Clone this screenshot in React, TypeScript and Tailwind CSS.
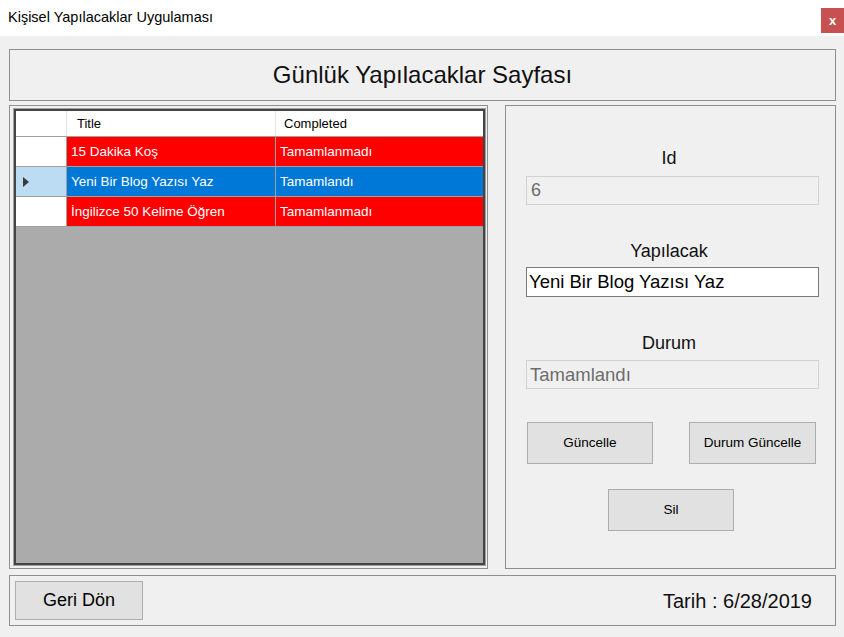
import React from "react";

const rows = [
  { title: "15 Dakika Koş", status: "Tamamlanmadı", selected: false },
  { title: "Yeni Bir Blog Yazısı Yaz", status: "Tamamlandı", selected: true },
  { title: "İngilizce 50 Kelime Öğren", status: "Tamamlanmadı", selected: false },
];

export default function App() {
  return (
    <div className="w-[844px] h-[637px] flex flex-col bg-[#f0f0f0] overflow-hidden" style={{ fontFamily: '"Liberation Sans", Arial, sans-serif' }}>
      {/* Title bar */}
      <div className="h-[36px] bg-white flex justify-between items-start shrink-0">
        <div className="pl-[8px] h-[36px] flex items-center text-[14.5px] text-black">Kişisel Yapılacaklar Uygulaması</div>
        <div className="mt-[8px] w-[23px] h-[25px] bg-[#c75050] flex items-center justify-center text-white text-[13px] font-bold leading-none">x</div>
      </div>

      <div className="flex flex-col pl-[9px] pr-[8px] pt-[13px]">
        {/* Header */}
        <div className="h-[52px] border border-[#8f8f8f] flex items-center justify-center text-[24px] text-[#111]">
          Günlük Yapılacaklar Sayfası
        </div>

        {/* Middle */}
        <div className="mt-[4px] h-[464px] flex gap-[17px]">
          {/* Left panel */}
          <div className="w-[479px] border border-[#8f8f8f] pl-[3px] pt-[2px] pr-[1px] pb-[2px] flex">
            <div className="flex-1 border border-[#a0a0a0] flex">
              <div className="flex-1 border-2 border-[#444444] bg-[#ababab] flex flex-col text-[13.5px]">
                {/* header row */}
                <div className="h-[26px] grid grid-cols-[51px_209px_1fr] bg-white border-b border-[#a0a0a0]">
                  <div className="border-r border-[#e3e3e3]" />
                  <div className="border-r border-[#e3e3e3] pl-[10px] flex items-center text-[13px] text-black">Title</div>
                  <div className="pl-[8px] flex items-center text-[13px] text-black">Completed</div>
                </div>
                {rows.map((r) => (
                  <div key={r.title} className="h-[30px] grid grid-cols-[51px_209px_1fr] border-b border-[#a0a0a0]">
                    <div className={`border-r border-[#a0a0a0] flex items-center pl-[7px] ${r.selected ? "bg-[#bcdcf4]" : "bg-white"}`}>
                      {r.selected && (
                        <svg width="7" height="10" viewBox="0 0 7 10">
                          <path d="M0 0 L6 5 L0 10 Z" fill="#3a3a3a" />
                        </svg>
                      )}
                    </div>
                    <div className={`border-r border-[#a0a0a0] pl-[4px] pt-[1px] flex items-center text-white ${r.selected ? "bg-[#0078d7]" : "bg-[#ff0000]"}`}>{r.title}</div>
                    <div className={`pl-[4px] pt-[1px] flex items-center text-white ${r.selected ? "bg-[#0078d7]" : "bg-[#ff0000]"}`}>{r.status}</div>
                  </div>
                ))}
              </div>
            </div>
          </div>

          {/* Right panel */}
          <div className="w-[331px] border border-[#8f8f8f] pl-[20px] pr-[16px] flex flex-col">
            <div className="mt-[42px] h-[21px] text-center pr-[7px] text-[18px] leading-[21px] text-[#111]">Id</div>
            <div className="mt-[7px] h-[29px] border border-[#d2d2d2] bg-[#f0f0f0] flex items-center pl-[4px] text-[18px] text-[#6d6d6d]">6</div>

            <div className="mt-[36px] h-[21px] text-center pr-[7px] text-[18px] leading-[21px] text-[#111]">Yapılacak</div>
            <div className="mt-[5px] h-[30px] border border-[#7a7a7a] bg-white flex items-center pl-[2px] text-[18.5px] text-black">Yeni Bir Blog Yazısı Yaz</div>

            <div className="mt-[36px] h-[21px] text-center pr-[7px] text-[18px] leading-[21px] text-[#111]">Durum</div>
            <div className="mt-[6px] h-[29px] border border-[#d2d2d2] bg-[#f0f0f0] flex items-center pl-[3px] text-[18.5px] text-[#6d6d6d]">Tamamlandı</div>

            <div className="mt-[33px] flex gap-[36px] pl-[1px]">
              <div className="w-[126px] h-[42px] border border-[#adadad] bg-[#e1e1e1] flex items-center justify-center text-[13.5px] text-black">Güncelle</div>
              <div className="w-[127px] h-[42px] border border-[#adadad] bg-[#e1e1e1] flex items-center justify-center text-[13.5px] text-black">Durum Güncelle</div>
            </div>
            <div className="mt-[25px] flex pl-[82px]">
              <div className="w-[126px] h-[42px] border border-[#adadad] bg-[#e1e1e1] flex items-center justify-center text-[13.5px] text-black">Sil</div>
            </div>
          </div>
        </div>

        {/* Bottom */}
        <div className="mt-[6px] h-[51px] border border-[#8f8f8f] flex items-start justify-between pl-[5px] pt-[5px] pr-[23px]">
          <div className="w-[128px] h-[39px] border border-[#adadad] bg-[#e1e1e1] flex items-center justify-center text-[18px] text-black">Geri Dön</div>
          <div className="h-[39px] flex items-center text-[20px] text-[#111]">Tarih : 6/28/2019</div>
        </div>
      </div>
    </div>
  );
}
